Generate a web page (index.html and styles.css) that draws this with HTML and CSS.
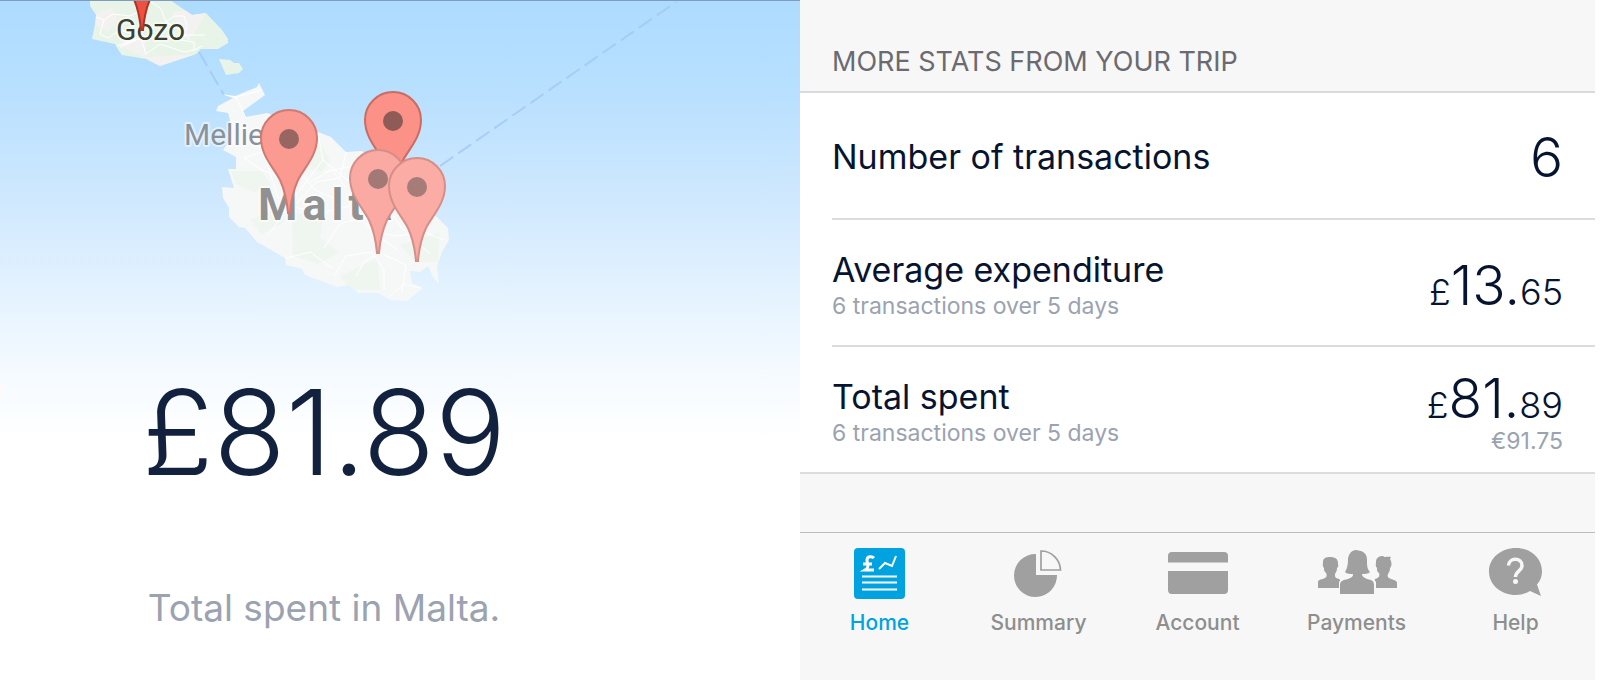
FILE: index.html
```html
<!DOCTYPE html>
<html lang="en">
<head>
<meta charset="utf-8">
<meta name="viewport" content="width=device-width, initial-scale=1">
<title>Trip summary</title>
<link rel="stylesheet" href="styles.css">
</head>
<body>
<main class="page">
  <section class="trip" aria-label="Trip total">
    <svg class="map" viewBox="0 0 800 440" role="img" aria-label="Map of Malta with transaction pins">
      <defs>
        <linearGradient id="sea" x1="0" y1="0" x2="0" y2="1">
          <stop offset="0" stop-color="#addbff"/>
          <stop offset=".22" stop-color="#b9e0ff"/>
          <stop offset=".45" stop-color="#cfe8fe"/>
          <stop offset=".68" stop-color="#e5f3ff"/>
          <stop offset=".84" stop-color="#f4faff"/>
          <stop offset="1" stop-color="#fff"/>
        </linearGradient>
        <path id="pin" d="M-1 0C-2-12-4-22-9-33C-15-45-28-57-28-75A28 28 0 0 1 28-75C28-57 15-45 9-33C4-22 2-12 1 0Z"/>
        <clipPath id="gozo-shape"><path d="M90 0L90 6L96 15L95 24L92 39L115 44L119 51L122 55L146 59L160 66L196 54L201 49L218 49L228 43L228 39L222 30L206 13L192 15L170 0Z"/></clipPath>
        <clipPath id="malta-shape"><path d="M222 94L235 96L257 87L259 83L265 95L243 111L246 117L267 113L318 132L331 137L346 152L362 151L388 180L413 200L437 217L448 228L449 240L442 252L437 267L439 284L433 277L428 266L420 272L410 271L412 283L423 288L407 301L390 300L378 293L358 293L349 285L337 287L305 275L302 269L286 265L285 258L257 242L245 228L239 227L229 217L229 208L223 198L222 187L234 188L228 169L236 169L236 157L223 150L230 140L230 120L228 113L216 111L218 106L233 98Z"/></clipPath>
      </defs>
      <rect width="800" height="440" fill="url(#sea)"/>
      <g class="ferry">
        <path d="M199 52L224 95"/>
        <path d="M440 166L676 2"/>
      </g>
      <g clip-path="url(#gozo-shape)">
        <rect x="80" width="160" height="80" fill="#e8f4e7"/>
        <path class="land" d="M96 14L112 8L118 20L108 32L95 24ZM120 40L145 36L147 58L122 47ZM146 57L196 54L160 70ZM172 12L206 8L203 20L190 39L180 30Z"/>
        <path class="road" d="M96 17L104 20L113 14L130 16L142 10L150 1M150 1L161 9L166 22L180 30L190 40M166 22L174 16L184 16L187 26L184 38M100 34L108 38L120 30L134 34M104 20L100 34M120 47L141 38L146 54L160 44L184 52L194 50L194 42L168 38M117 46L141 38M184 35L205 35M194 50L202 46"/>
      </g>
      <path d="M219 59L230 60L234 63L239 63L243 69L239 73L226 75Z" fill="#e8f4e7"/>
      <g clip-path="url(#malta-shape)">
        <rect x="210" y="80" width="250" height="230" fill="#f6f7f7"/>
        <path class="green" d="M231 171L262 171L274 190L252 192L236 184ZM300 152L315 134L330 160L322 172L300 166ZM292 214L324 215L320 238L340 252L318 264L293 256ZM250 220L286 204L284 222L262 234ZM340 276L378 258L380 290L350 290ZM400 245L440 232L438 262L415 262ZM390 202L425 215L410 232Z"/>
        <path class="road" d="M222 95L236 97L246 118M236 97L262 90M244 158L272 148L268 166L280 204M244 158L262 170L276 176M318 133L323 160L300 190M323 160L350 182L372 232L378 248M346 152L340 178L316 182L296 204M324 172L354 166L372 180M268 235L290 206L320 213L350 206M324 248L340 224L360 218L372 232L398 250M283 259L310 252L332 268M335 275L346 256L372 252L384 270L384 290M378 252L406 265L402 292M372 232L398 236L424 232L444 240M388 208L402 228L430 254M390 296L404 284L420 288M356 276L364 262L374 256M404 196L420 224L430 236M300 172L315 190L338 200M310 182L332 170L346 188"/>
      </g>
      <g class="place">
        <text x="116" y="40" class="gozo">Gozo</text>
        <text x="184" y="145" class="mellieha">Mellie</text>
        <text x="258" y="220" class="malta">Malta</text>
      </g>
      <g class="pin">
        <g transform="translate(142 30)"><use href="#pin" fill="#f0513f" stroke="#a93528"/></g>
        <g transform="translate(289 213)"><use href="#pin" fill="#fa9a91" stroke="#d07a71"/><circle cy="-74" r="10" fill="#986662"/></g>
        <g transform="translate(393 195)"><use href="#pin" fill="#fb9187" stroke="#c96c62"/><circle cy="-74" r="10" fill="#8e5b56"/></g>
        <g transform="translate(378 253)"><use href="#pin" fill="#faaaa3" stroke="#d38f88"/><circle cy="-74" r="10" fill="#a27974"/></g>
        <g transform="translate(417 261)"><use href="#pin" fill="#faaca5" stroke="#d58f88"/><circle cy="-74" r="10" fill="#a57c77"/></g>
      </g>
      <circle cx="-5" cy="390" r="9" fill="#fff9f9"/>
      <path d="M0 0H800V1H0Z" fill="#7f9ebb"/>
    </svg>
    <div class="total">
      <p class="total-amount">£81.89</p>
      <p class="total-caption">Total spent in Malta.</p>
    </div>
  </section>

  <section class="stats" aria-labelledby="stats-title">
    <h1 class="stats-title" id="stats-title">MORE STATS FROM YOUR TRIP</h1>
    <ul class="rows">
      <li class="row">
        <div class="row-text"><h2 class="label">Number of transactions</h2></div>
        <div class="value"><p class="amount">6</p></div>
      </li>
      <li class="row">
        <div class="row-text"><h2 class="label">Average expenditure</h2><p class="note">6 transactions over 5 days</p></div>
        <div class="value value-low"><p class="amount"><span class="minor">£</span>13.<span class="minor">65</span></p></div>
      </li>
      <li class="row">
        <div class="row-text"><h2 class="label">Total spent</h2><p class="note">6 transactions over 5 days</p></div>
        <div class="value"><p class="amount"><span class="minor">£</span>81.<span class="minor">89</span></p><p class="converted">€91.75</p></div>
      </li>
    </ul>
    <nav class="tabs" aria-label="Main">
      <a class="tab tab-active" href="#home" aria-current="page">
        <svg class="icon" viewBox="0 0 80 52" aria-hidden="true">
          <rect x="14" y="1" width="51" height="51" rx="4" fill="currentColor"/>
          <g fill="none" stroke="#fff" stroke-width="2">
            <path d="M34 11C32 9 27 9 27 13C27 17 30 20 25 23H34M23 17H32" stroke-width="3"/>
            <path d="M39 22L45 16L52 19L56 9M22 29.500H57M22 35.500H57M22 42.500H57"/>
          </g>
        </svg>
        <span>Home</span>
      </a>
      <a class="tab" href="#summary">
        <svg class="icon" viewBox="0 0 80 52" aria-hidden="true">
          <path d="M37 7A21.500 21.500 0 1 0 58 28H37Z" fill="currentColor"/>
          <path d="M42 4V23H61.500A19.500 19.500 0 0 0 42 4Z" fill="none" stroke="currentColor" stroke-width="1.700"/>
        </svg>
        <span>Summary</span>
      </a>
      <a class="tab" href="#account">
        <svg class="icon" viewBox="0 0 80 52" aria-hidden="true">
          <path d="M10 15.500V9A4 4 0 0 1 14 5H66A4 4 0 0 1 70 9V15.500ZM10 24H70V43A4 4 0 0 1 66 47H14A4 4 0 0 1 10 43Z" fill="currentColor"/>
        </svg>
        <span>Account</span>
      </a>
      <a class="tab" href="#payments">
        <svg class="icon" viewBox="0 0 80 52" aria-hidden="true">
          <g fill="currentColor">
            <path d="M1 41V35C1 33 3 33 8 31C10 30 10 28 9 26C7 24 7 23 7 21C5 19 6 17 6 15C6 11 9 10 13 10C18 10 21 12 21 16C21 18 22 20 20 21C20 24 19 25 18 27C18 30 18 31 22 32Q24 33 22 35V41Z"/>
            <path d="M59 41V35Q57 33 58 32C62 31 63 29 62 26C60 25 60 23 60 21C58 19 59 17 59 15C59 10 63 9 66 9C68 11 71 9 74 10L73 12C75 15 75 19 73 21C73 24 72 25 71 27C70 30 71 31 77 33C80 34 80 35 80 37V41Z"/>
            <path d="M23 47V38C23 34 26 33 31 32C36 30 36 29 36 27C33 27 30 27 28 25C30 22 31 17 31 13C31 7 35 3 39 3C41 3 42 4 44 4C49 6 50 9 50 13C50 18 50 22 53 25C51 27 48 27 45 27C45 29 46 30 50 32C55 33 57 34 57 38V47Z"/>
          </g>
        </svg>
        <span>Payments</span>
      </a>
      <a class="tab" href="#help">
        <svg class="icon" viewBox="0 0 80 52" aria-hidden="true">
          <path d="M40 1C54.500 1 66 11 66 24.500C66 30 64 34 61 37.500L65 49L54 44C50 46.500 45 48 40 48C25 48 13 38 13 24.500C13 11 25 1 40 1Z" fill="currentColor"/>
          <path d="M32.500 18.500C33 10 46 10.500 46 18.500C46 24 39.500 24 39.500 30" fill="none" stroke="#f7f7f7" stroke-width="3.500"/>
          <circle cx="39.500" cy="34.500" r="2.500" fill="#f7f7f7"/>
        </svg>
        <span>Help</span>
      </a>
    </nav>
  </section>
</main>
</body>
</html>
```
FILE: styles.css
```css
* { box-sizing: border-box; }

body {
  margin: 0;
  background: #fff;
  color: #06142f;
  font-family: Inter, "Liberation Sans", sans-serif;
}

h1, h2, p, ul { margin: 0; padding: 0; }

.page {
  display: grid;
  grid-template-columns: 1fr 1fr;
  min-height: 100vh;
}

/* Map and headline total */
.trip {
  display: grid;
  align-items: start;
  overflow: hidden;
}

.map,
.total { grid-area: 1 / 1; }

.map { display: block; width: 100%; }

.ferry { fill: none; stroke: #a3c8f2; stroke-width: 2; stroke-opacity: .8; stroke-dasharray: 16 6; }
.land { fill: #f3f2f1; }
.green { fill: #eff6f0; }
.road { fill: none; stroke: #fff; stroke-width: 1; }

.place { font-family: Roboto, "Liberation Sans", sans-serif; paint-order: stroke; stroke: rgba(255, 255, 255, .5); stroke-width: 4; stroke-linejoin: round; }
.gozo { font-size: 30px; fill: #3d3f30; }
.mellieha { font-size: 30px; fill: #8b9198; }
.malta { font-size: 45px; font-weight: 700; letter-spacing: 5px; fill: #919191; }
.pin { stroke-width: 2; }

.total {
  width: max-content;
  padding: 360px 0 48px 142px;
  text-align: center;
}

.total-amount { color: #12213d; font-size: 118px; font-weight: 300; line-height: 144px; }
.total-caption { margin-top: 80px; color: #9ba2b0; font-size: 37px; line-height: 48px; }

/* Statistics list */
.stats {
  display: flex;
  flex-direction: column;
  margin-right: 5px;
  background: #f7f7f7;
}

.stats-title {
  padding: 46px 32px 13px;
  border-bottom: 2px solid #dadadc;
  color: #6a6a70;
  font-size: 27px;
  font-weight: 400;
  line-height: 32px;
}

.rows {
  list-style: none;
  padding-left: 32px;
  border-bottom: 2px solid #dcdcde;
  background: #fff;
}

.row {
  display: flex;
  align-items: center;
  justify-content: space-between;
  min-height: 127px;
  padding-right: 32px;
  border-bottom: 2px solid #dcdcde;
}

.row:last-child { min-height: 125px; border-bottom: 0; }

.row-text { padding-top: 3px; }
.label { font-size: 34px; font-weight: 400; line-height: 40px; }
.note,
.converted { color: #9ba2b0; font-size: 23px; }
.note { margin-top: 3px; line-height: 26px; }
.converted { line-height: 20px; }
.value { padding-top: 3px; text-align: right; }
.value-low { padding-top: 12px; }
.amount { font-size: 55px; font-weight: 300; line-height: 52px; }
.minor { font-size: 36px; }

/* Bottom navigation */
.tabs {
  display: grid;
  grid-template-columns: repeat(5, 1fr);
  margin-top: auto;
  padding: 14px 0 44px;
  border-top: 1px solid #bdbdbf;
}

.tab {
  display: flex;
  flex-direction: column;
  align-items: center;
  gap: 11px;
  color: #8e8e8e;
  font-size: 21px;
  font-weight: 500;
  line-height: 26px;
  text-decoration: none;
}

.icon { width: 80px; height: 52px; color: #a0a0a0; }
.tab-active,
.tab-active .icon { color: #00a3df; }
```
